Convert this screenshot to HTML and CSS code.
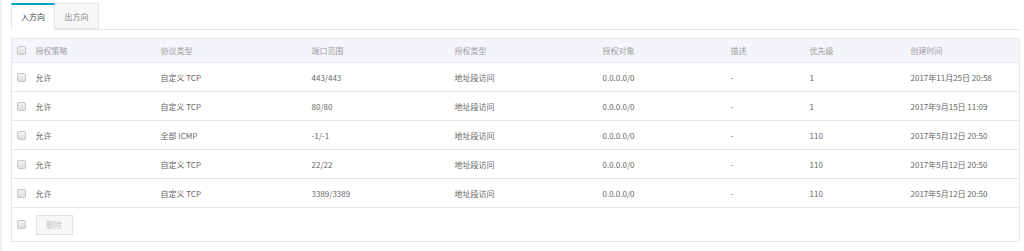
FILE: index.html
```html
<!DOCTYPE html>
<html lang="zh-CN">
<head>
  <meta charset="UTF-8" />
  <title>安全组规则</title>
  <link rel="stylesheet" href="styles.css">
</head>
<body>
  <div class="page">

    <!-- TABS -->
    <div class="tabs">
      <div class="tab active">入方向</div>
      <div class="tab">出方向</div>
    </div>

    <!-- RULE TABLE -->
    <table class="rules">
      <colgroup>
        <col style="width:24px">
        <col style="width:125px">
        <col style="width:151px">
        <col style="width:143px">
        <col style="width:148px">
        <col style="width:128px">
        <col style="width:79px">
        <col style="width:101px">
        <col>
      </colgroup>
      <thead>
        <tr>
          <th class="check"><span class="box"></span></th>
          <th>授权策略</th>
          <th>协议类型</th>
          <th>端口范围</th>
          <th>授权类型</th>
          <th>授权对象</th>
          <th>描述</th>
          <th>优先级</th>
          <th>创建时间</th>
        </tr>
      </thead>
      <tbody>
        <tr>
          <td class="check"><span class="box"></span></td>
          <td>允许</td><td>自定义 TCP</td><td>443/443</td><td>地址段访问</td>
          <td>0.0.0.0/0</td><td>-</td><td>1</td><td>2017年11月25日 20:58</td>
        </tr>
        <tr>
          <td class="check"><span class="box"></span></td>
          <td>允许</td><td>自定义 TCP</td><td>80/80</td><td>地址段访问</td>
          <td>0.0.0.0/0</td><td>-</td><td>1</td><td>2017年9月15日 11:09</td>
        </tr>
        <tr>
          <td class="check"><span class="box"></span></td>
          <td>允许</td><td>全部 ICMP</td><td>-1/-1</td><td>地址段访问</td>
          <td>0.0.0.0/0</td><td>-</td><td>110</td><td>2017年5月12日 20:50</td>
        </tr>
        <tr>
          <td class="check"><span class="box"></span></td>
          <td>允许</td><td>自定义 TCP</td><td>22/22</td><td>地址段访问</td>
          <td>0.0.0.0/0</td><td>-</td><td>110</td><td>2017年5月12日 20:50</td>
        </tr>
        <tr>
          <td class="check"><span class="box"></span></td>
          <td>允许</td><td>自定义 TCP</td><td>3389/3389</td><td>地址段访问</td>
          <td>0.0.0.0/0</td><td>-</td><td>110</td><td>2017年5月12日 20:50</td>
        </tr>
      </tbody>
      <tfoot>
        <tr>
          <td class="check"><span class="box"></span></td>
          <td colspan="8"><button class="btn" disabled>删除</button></td>
        </tr>
      </tfoot>
    </table>

  </div>
</body>
</html>
```

FILE: styles.css
```css
body {
  margin: 0;
  padding: 0;
  background: #fff;
  font-family: "Noto Sans CJK SC", "Liberation Sans", sans-serif;
  font-size: 8px;
  color: #666;
}
.page {
  border-left: 2px solid #f0f2f6;
  min-height: 251px;
  box-sizing: border-box;
  padding: 3px 4px 0 9px;
}
.tabs {
  display: flex;
  width: 1009px;
  height: 26px;
  border-bottom: 1px solid #e6e6e6;
}
.tab {
  width: 44px;
  height: 26px;
  line-height: 26px;
  text-align: center;
  background: #f7f7f7;
  color: #888;
  border: 1px solid #e6e6e6;
  border-left: none;
  box-sizing: border-box;
}
.tab.active {
  background: #fff;
  color: #444;
  border-left: 1px solid #e6e6e6;
  border-top: 2px solid #00a2ca;
  border-bottom: 1px solid #fff;
  height: 27px;
  line-height: 24px;
}
.rules {
  margin-top: 8px;
  width: 1009px;
  table-layout: fixed;
  border-collapse: collapse;
  border: 1px solid #e6e8ee;
}
.rules th {
  height: 23px;
  background: #f4f5f9;
  color: #a0a0a0;
  font-weight: normal;
  text-align: left;
  padding: 0;
  border-bottom: 1px solid #e6e8ee;
}
.rules td {
  height: 28px;
  padding: 0;
  border-bottom: 1px solid #e8e8e8;
  white-space: nowrap;
}
.rules tfoot td {
  height: 33px;
  border-bottom: none;
}
.check {
  padding-left: 5px !important;
}
.box {
  display: block;
  width: 9px;
  height: 9px;
  border: 1px solid #c6c6c6;
  border-radius: 2px;
  box-sizing: border-box;
  background: linear-gradient(#f4f4f4, #dedede);
}
.btn {
  width: 37px;
  height: 20px;
  padding: 0;
  font-family: inherit;
  font-size: 8px;
  color: #c4c4c4;
  background: #f7f7f7;
  border: 1px solid #e2e2e2;
  border-radius: 0;
}
```
